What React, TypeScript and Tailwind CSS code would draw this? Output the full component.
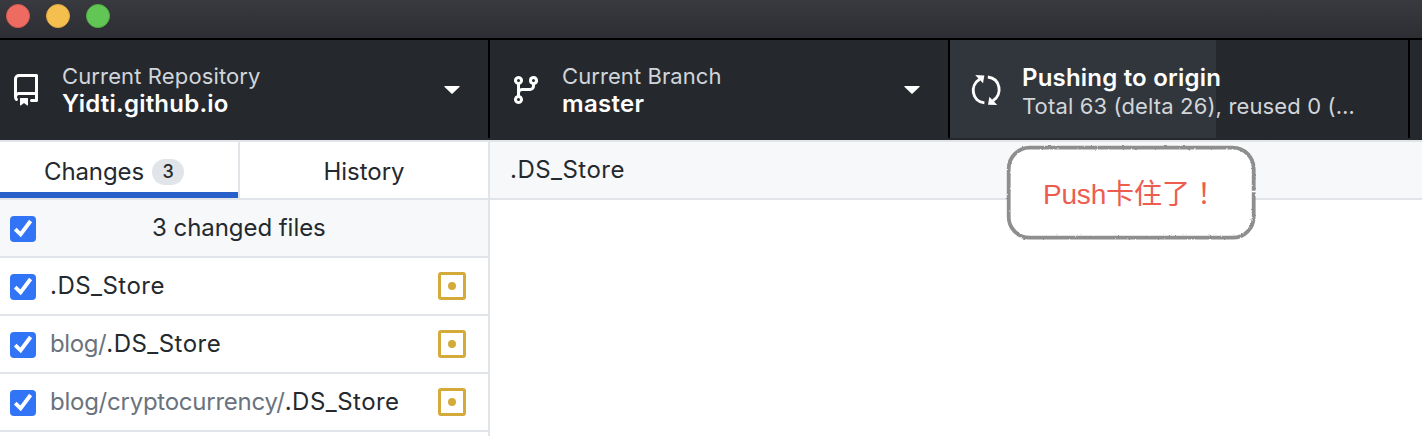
import type { ReactNode } from "react";

function RepoIcon() {
  return (
    <svg className="size-8 shrink-0" viewBox="0 0 16 16" fill="currentColor" aria-hidden="true">
      <path
        fillRule="evenodd"
        d="M2 2.5A2.5 2.5 0 014.5 0h8.75a.75.75 0 01.75.75v12.5a.75.75 0 01-.75.75h-2.5a.75.75 0 110-1.5h1.75v-2h-8a1 1 0 00-.714 1.7.75.75 0 01-1.072 1.05A2.495 2.495 0 012 11.5v-9zm10.5-1V9h-8c-.356 0-.694.074-1 .208V2.5a1 1 0 011-1h8zM5 12.25v3.25a.25.25 0 00.4.2l1.45-1.087a.25.25 0 01.3 0L8.6 15.7a.25.25 0 00.4-.2v-3.25a.25.25 0 00-.25-.25h-3.5a.25.25 0 00-.25.25z"
      />
    </svg>
  );
}

function BranchIcon() {
  return (
    <svg className="size-8 shrink-0" viewBox="0 0 16 16" fill="currentColor" aria-hidden="true">
      <path
        fillRule="evenodd"
        d="M11.75 2.5a.75.75 0 100 1.5.75.75 0 000-1.5zm-2.25.75a2.25 2.25 0 113 2.122V6A2.5 2.5 0 0110 8.5H6a1 1 0 00-1 1v1.128a2.251 2.251 0 11-1.5 0V5.372a2.25 2.25 0 111.5 0v1.836A2.492 2.492 0 016 7h4a1 1 0 001-1v-.628A2.25 2.25 0 019.5 3.25zM4.25 12a.75.75 0 100 1.5.75.75 0 000-1.5zM3.5 3.25a.75.75 0 111.5 0 .75.75 0 01-1.5 0z"
      />
    </svg>
  );
}

function SyncIcon() {
  return (
    <svg className="size-8 shrink-0" viewBox="0 0 32 32" fill="none" aria-hidden="true">
      <path d="M9.6 5.2C-0.4 11.4 1.6 27.4 14.4 28.9" stroke="currentColor" strokeWidth="2.9" />
      <path d="M17.8 3C30.8 4.6 32.8 20.6 22.9 26.8" stroke="currentColor" strokeWidth="2.9" />
      <path d="M5.2 0.9L14.4 1.5L13 9.2Z" fill="currentColor" />
      <path d="M27.2 31L18 30.8L19.4 22.8Z" fill="currentColor" />
    </svg>
  );
}

function Caret() {
  return (
    <svg className="h-[9px] w-4 shrink-0" viewBox="0 0 16 9" fill="currentColor" aria-hidden="true">
      <path d="M.6 0H15.4Q16 .4 15.4 1L8.6 7.6Q8 8.2 7.4 7.6L.6 1Q0 .4 .6 0Z" />
    </svg>
  );
}

function Checkbox() {
  return (
    <span className="mt-0.5 flex size-[26px] shrink-0 items-center justify-center rounded-[4px] bg-[#3274f6]">
      <svg className="size-[26px]" viewBox="0 0 26 26" fill="none" aria-hidden="true">
        <path d="M5.2 13.2L10.6 18.3L20.6 5" stroke="#fff" strokeWidth="3.9" />
      </svg>
    </span>
  );
}

function ModifiedIcon() {
  return (
    <span className="flex size-7 shrink-0 items-center justify-center rounded-[3px] border-3 border-[#d4ab3a]">
      <span className="size-2 rounded-full bg-[#d4ab3a]" />
    </span>
  );
}

function FileRow({ dir, children }: { dir?: ReactNode; children: ReactNode }) {
  return (
    <li className="flex h-[58px] items-center border-b-2 border-[#e1e4e8] bg-white pr-[22px] pl-2.5">
      <Checkbox />
      <span className="ml-3.5 flex-1 whitespace-nowrap">
        {dir}
        <span className="tracking-[0.47px]">{children}</span>
      </span>
      <ModifiedIcon />
    </li>
  );
}

export default function App() {
  return (
    <div className="relative flex h-[436px] w-[1422px] flex-col overflow-hidden bg-white font-['Inter',sans-serif] text-[24px] leading-7 text-[#24292e]">
      <header className="flex h-10 shrink-0 gap-4 border-b-2 border-black bg-linear-to-b from-[#383a40] to-[#2d2e33] pt-1 pl-1.5">
        <span className="size-6 rounded-full border border-[#d95a50] bg-[#ed6b60]" />
        <span className="size-6 rounded-full border border-[#dfa940] bg-[#f5bf50]" />
        <span className="size-6 rounded-full border border-[#52ae42] bg-[#62c655]" />
      </header>

      <nav className="flex h-[100px] shrink-0 bg-[#25292e] pb-0.5 text-white">
        <div className="flex w-[490px] items-center border-r-2 border-black pt-0.5 pr-[28px] pl-2.5">
          <RepoIcon />
          <div className="ml-5 flex-1 whitespace-nowrap">
            <div className="text-[22px] leading-[27px] tracking-[0.13px] text-[#d1d5da]">Current Repository</div>
            <div className="leading-7 font-semibold tracking-[0.22px]">Yidti.github.io</div>
          </div>
          <Caret />
        </div>
        <div className="flex w-[460px] items-center border-r-2 border-black pt-0.5 pr-[28px] pl-5">
          <BranchIcon />
          <div className="ml-5 flex-1 whitespace-nowrap">
            <div className="text-[22px] leading-[27px] tracking-[0.08px] text-[#d1d5da]">Current Branch</div>
            <div className="leading-7 font-semibold tracking-[0.3px]">master</div>
          </div>
          <Caret />
        </div>
        <div className="flex w-[460px] items-center border-r-2 border-black bg-linear-to-r from-[#31363d] from-[266px] to-[#25292e] to-[266px] pt-0.5 pl-5">
          <SyncIcon />
          <div className="ml-5 pt-[5px] whitespace-nowrap">
            <div className="leading-7 font-semibold tracking-[0.2px]">Pushing to origin</div>
            <div className="text-[22px] leading-[29px] tracking-[0.14px] text-[#d1d5da]">
              Total 63 (delta 26), reused 0 (…
            </div>
          </div>
        </div>
      </nav>

      <main className="flex min-h-0 flex-1 border-t-2 border-[#e1e4e8]">
        <aside className="w-[490px] shrink-0 border-r-2 border-[#e1e4e8]">
          <div className="flex h-[58px] border-b-2 border-[#e1e4e8]">
            <div className="flex w-[240px] items-center justify-center gap-2 border-r-2 border-[#e1e4e8] pt-1 pr-2.5 shadow-[inset_0_-6px_0_#2860ca]">
              <span className="tracking-[-0.1px]">Changes</span>
              <span className="flex h-[26px] w-8 items-center justify-center rounded-full bg-[#e1e4e8] text-[18px] font-medium">
                3
              </span>
            </div>
            <div className="flex flex-1 items-center justify-center pt-1">History</div>
          </div>
          <div className="flex h-[58px] items-center border-b-2 border-[#e1e4e8] bg-[#f6f8fa] pl-2.5">
            <Checkbox />
            <span className="ml-[116px] tracking-[-0.05px]">3 changed files</span>
          </div>
          <ul>
            <FileRow>.DS_Store</FileRow>
            <FileRow dir={<span className="tracking-[-0.4px] text-[#6a737d]">blog/</span>}>.DS_Store</FileRow>
            <FileRow dir={<span className="tracking-[-0.25px] text-[#6a737d]">blog/cryptocurrency/</span>}>
              .DS_Store
            </FileRow>
          </ul>
        </aside>
        <section className="flex-1">
          <div className="flex h-[58px] items-center border-b-2 border-[#e1e4e8] bg-[#f6f8fa] pl-5 tracking-[0.47px]">
            .DS_Store
          </div>
        </section>
      </main>

      <div className="absolute top-[145px] left-[1006px] flex h-[95px] w-[250px] items-center">
        <svg className="absolute inset-0" viewBox="0 0 250 95" fill="none" aria-hidden="true">
          <defs>
            <filter id="pencil" x="-5%" y="-5%" width="110%" height="110%">
              <feTurbulence type="fractalNoise" baseFrequency="0.35" numOctaves="2" seed="4" />
              <feDisplacementMap in="SourceGraphic" scale="2.2" xChannelSelector="R" yChannelSelector="G" />
              <feGaussianBlur stdDeviation="0.6" />
            </filter>
          </defs>
          <rect x="2.7" y="2.7" width="245" height="90" rx="21" fill="#fff" />
          <rect x="2.7" y="2.7" width="245" height="90" rx="21" stroke="#8e8e8e" strokeWidth="3.8" filter="url(#pencil)" />
          <path d="M244 46.5H251" stroke="#fff" strokeWidth="1.5" />
        </svg>
        <span className="relative mt-0.5 ml-[37px] font-['Liberation_Sans','Noto_Sans_CJK_SC',sans-serif] text-[28px] whitespace-nowrap text-[#ec5d50]">
          <span className="tracking-[-0.2px]">Push</span>
          卡住了
          <span className="font-['Noto_Sans_CJK_TC',sans-serif]" lang="zh-Hant">！</span>
        </span>
      </div>
    </div>
  );
}
